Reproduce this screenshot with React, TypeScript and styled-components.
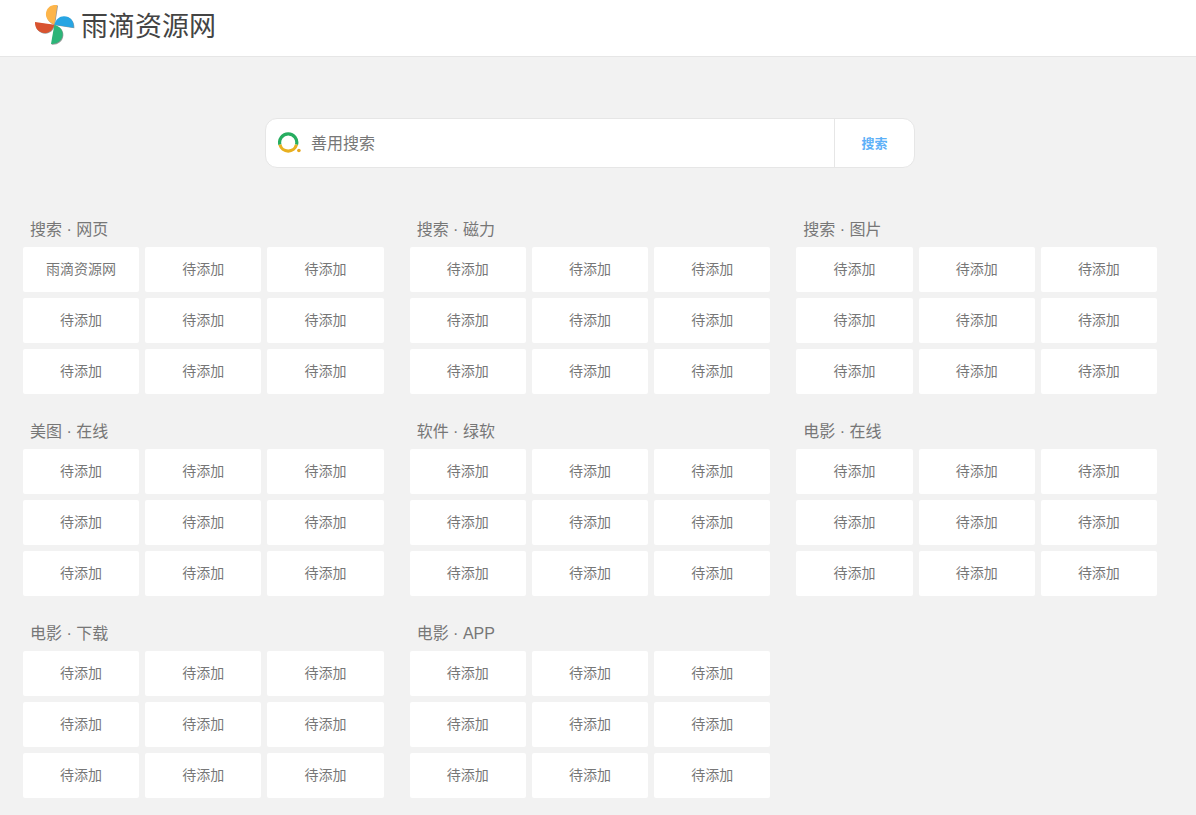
import React from "react";
import styled, { createGlobalStyle } from "styled-components";

const GlobalStyle = createGlobalStyle`
  * { box-sizing: border-box; }
  body {
    margin: 0;
    background: #f2f2f2;
    color: #777;
    font-family: "Liberation Sans", "Noto Sans CJK SC", sans-serif;
    font-size: 14px;
  }
`;

const Header = styled.header`
  height: 57px;
  padding: 5px 34px 0;
  background: #fff;
  border-bottom: 1px solid #e6e6e6;
`;

const Brand = styled.a`
  display: inline-flex;
  align-items: flex-start;
  gap: 6px;
  color: #444;
  text-decoration: none;
`;

const BrandName = styled.span`
  font-size: 27px;
  line-height: 44px;
`;

const Main = styled.main`
  padding: 61px 39px 17px 23px;
`;

const SearchForm = styled.form`
  display: flex;
  align-items: center;
  width: 100%;
  max-width: 650px;
  height: 50px;
  margin: 0 auto 44px;
  background: #fff;
  border: 1px solid #e6e6e6;
  border-radius: 12px;
  overflow: hidden;
`;

const SearchLabel = styled.label`
  display: flex;
  padding: 0 9px 0 12px;
`;

const SearchInput = styled.input`
  flex: 1;
  min-width: 0;
  height: 100%;
  padding: 2px 0 0;
  border: 0;
  outline: 0;
  background: transparent;
  color: #777;
  font: inherit;
  font-size: 16px;
  &::placeholder { color: #777; opacity: 1; }
`;

const SearchButton = styled.button`
  width: 80px;
  height: 100%;
  padding: 0 0 2px;
  border: 0;
  border-left: 1px solid #e6e6e6;
  background: transparent;
  color: #5cb0f8;
  font: inherit;
  font-size: 13px;
  font-weight: 700;
  cursor: pointer;
`;

const Categories = styled.div`
  display: grid;
  grid-template-columns: repeat(3, minmax(0, 1fr));
  gap: 20px 26px;
`;

const CategoryTitle = styled.h2`
  margin: 0;
  padding-left: 7px;
  font-size: 16px;
  line-height: 35px;
  font-weight: 400;
`;

const Tiles = styled.div`
  display: grid;
  grid-template-columns: repeat(3, minmax(0, 1fr));
  gap: 6px;
`;

const Tile = styled.a`
  border-radius: 2px;
  background: #fff;
  color: #777;
  line-height: 45px;
  text-align: center;
  text-decoration: none;
`;

const PinwheelIcon = () => (
  <svg width="41" height="41" viewBox="18 15 123 123" aria-hidden="true">
    <g fill="#999" transform="translate(2 2)">
      <path d="M79 74L88 15C66 12 52 28 54 46C56 60 68 70 79 74Z" />
      <path d="M79 74C84 58 94 49 108 49C126 49 138 62 137 83Z" />
      <path d="M79 74C96 80 105 90 104 105C102 122 88 133 69 132Z" />
      <path d="M79 74C74 90 64 99 50 99C32 98 20 85 21 66Z" />
    </g>
    <path fill="#fdb54a" d="M79 74L88 15C66 12 52 28 54 46C56 60 68 70 79 74Z" />
    <path fill="#27a5e3" d="M79 74C84 58 94 49 108 49C126 49 138 62 137 83Z" />
    <path fill="#2bb578" d="M79 74C96 80 105 90 104 105C102 122 88 133 69 132Z" />
    <path fill="#d9532f" d="M79 74C74 90 64 99 50 99C32 98 20 85 21 66Z" />
  </svg>
);

const SearchEngineIcon = () => (
  <svg width="24" height="22" viewBox="0 0 24 22" aria-hidden="true">
    <path d="M1.9 12.7A8.6 8.6 0 1 1 18.5 12.7" fill="none" stroke="#27ad60" strokeWidth="3.2" />
    <path d="M1.9 12.7A8.6 8.6 0 0 0 18.5 12.7" fill="none" stroke="#e8b020" strokeWidth="3.2" />
    <circle cx="20.9" cy="18.5" r="1.8" fill="#e8a820" />
  </svg>
);

const PLACEHOLDER = "待添加";

const categories = [
  { title: "搜索 · 网页", first: "雨滴资源网" },
  { title: "搜索 · 磁力" },
  { title: "搜索 · 图片" },
  { title: "美图 · 在线" },
  { title: "软件 · 绿软" },
  { title: "电影 · 在线" },
  { title: "电影 · 下载" },
  { title: "电影 · APP" },
];

export default function App() {
  return (
    <>
      <GlobalStyle />
      <Header>
        <Brand href="#">
          <PinwheelIcon />
          <BrandName>雨滴资源网</BrandName>
        </Brand>
      </Header>
      <Main>
        <SearchForm onSubmit={(e) => e.preventDefault()}>
          <SearchLabel htmlFor="query">
            <SearchEngineIcon />
          </SearchLabel>
          <SearchInput id="query" type="text" placeholder="善用搜索" aria-label="善用搜索" />
          <SearchButton type="submit">搜索</SearchButton>
        </SearchForm>
        <Categories>
          {categories.map(({ title, first }) => (
            <section key={title}>
              <CategoryTitle>{title}</CategoryTitle>
              <Tiles>
                {Array.from({ length: 9 }, (_, i) => (
                  <Tile key={i} href="#">
                    {i === 0 && first ? first : PLACEHOLDER}
                  </Tile>
                ))}
              </Tiles>
            </section>
          ))}
        </Categories>
      </Main>
    </>
  );
}
